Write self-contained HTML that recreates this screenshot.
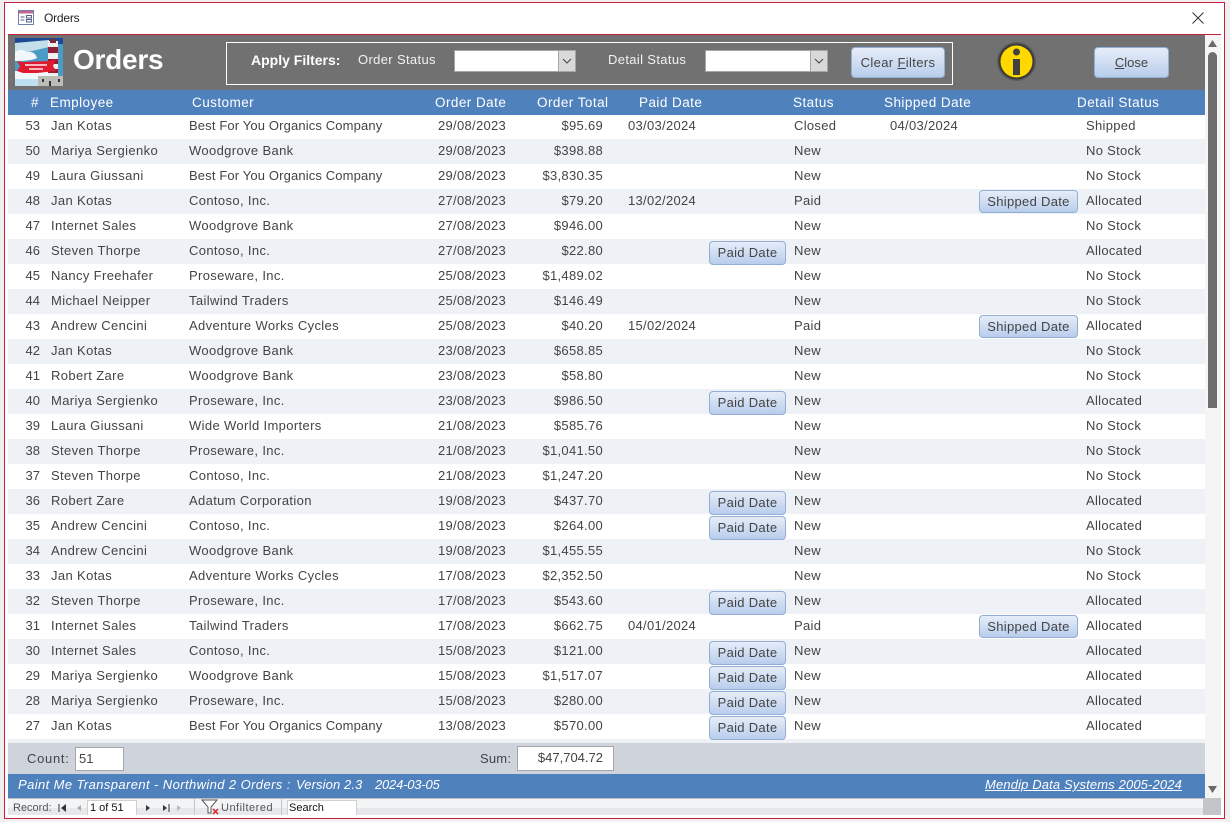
<!DOCTYPE html>
<html><head><meta charset="utf-8"><title>Orders</title>
<style>
html,body{margin:0;padding:0;width:1230px;height:822px;overflow:hidden;background:#f0f0f0;font-family:"Liberation Sans",sans-serif;font-size:13px;color:#444}
div,span{position:absolute;white-space:nowrap;box-sizing:border-box}
#win{left:4px;top:2px;width:1221px;height:817px;background:#fff;border:1px solid #c4223a}
.r{left:8px;width:1197px;height:25px;line-height:23px;background:#fff;letter-spacing:.3px}
.r.a{background:#eef1f6}
.r span{top:0}
.n{left:0;width:32px;text-align:right;letter-spacing:0}
.e{left:43px;letter-spacing:.37px}.c{left:181px;letter-spacing:.36px}.c.l{letter-spacing:.14px}.d{left:430px}
.t{left:495px;width:100px;text-align:right}
.p{left:620px}.s{left:786px}.h{left:882px}.x{left:1078px}
.b{background:linear-gradient(#e6edf8,#b8cdec);border:1px solid #92aed4;border-radius:4px;text-align:center;color:#444}
.r .pb{left:701px;top:2px;width:77px;height:24px;line-height:21px;z-index:2}
.r .sb{left:971px;top:1px;width:99px;height:23px;line-height:21px;z-index:2}
.hd span{top:94px;color:#fff;line-height:17px;font-size:13.5px;letter-spacing:.45px}
.w{color:#fff}
</style></head><body>
<div id="win"></div>

<svg style="position:absolute;left:18px;top:10px" width="16" height="15" viewBox="0 0 16 15"><rect x=".5" y=".5" width="15" height="14" fill="#fff" stroke="#6f7fa8"/><rect x="1" y="1" width="14" height="2.5" fill="#c0688f"/><path d="M2.5 7h4M2.5 10h4" stroke="#55628a"/><rect x="8.5" y="5.5" width="5" height="2.5" fill="none" stroke="#55628a"/><rect x="8.5" y="9.5" width="5" height="2.5" fill="none" stroke="#55628a"/></svg>
<div style="left:44px;top:11px;font-size:12px;color:#222;line-height:15px;letter-spacing:-.2px">Orders</div>
<svg style="position:absolute;left:1192px;top:12px" width="12" height="12" viewBox="0 0 12 12"><path d="M.5.5l11 11M11.5.5l-11 11" stroke="#333" stroke-width="1"/></svg>

<div style="left:8px;top:34px;width:1213px;height:1px;background:#c4223a"></div>
<div style="left:8px;top:35px;width:1197px;height:55px;background:#717171"></div>

<svg style="position:absolute;left:15px;top:38px" width="48" height="48" viewBox="0 0 48 48">
<rect width="48" height="48" fill="#4a9cc4"/><rect width="48" height="6" fill="#1c4a94"/>
<path d="M0 5L34 2V9L0 17Z" fill="#c4dfea"/>
<path d="M0 14q6-4 12 0q8-1 10 6q-6 3-22 3Z" fill="#f2f7fa"/>
<path d="M0 33h34v8h-12v7H0Z" fill="#f2f7fa"/>
<rect x="0" y="41" width="24" height="7" fill="#bfe0ee"/>
<rect x="33" y="3" width="10" height="36" fill="#f4f0f0"/><rect x="33" y="9" width="10" height="6" fill="#8f1f38"/><rect x="33" y="21" width="10" height="5" fill="#8f1f38"/><rect x="33" y="31" width="10" height="4" fill="#8f1f38"/>
<rect x="35" y="1" width="6" height="4" fill="#7d2a3a"/>
<path d="M2 23L8 24L34 23L41 21L38 28L41 33L22 35L8 35L2 33L5 28Z" fill="#e01b30"/>
<rect x="10" y="26" width="22" height="2" fill="#f7b8c0"/><rect x="14" y="30" width="14" height="2" fill="#f7b8c0"/>
<rect x="23" y="38" width="25" height="10" fill="#bdbdb8"/><rect x="27" y="41" width="2" height="3" fill="#333"/><rect x="34" y="43" width="2" height="5" fill="#333"/><rect x="43" y="41" width="2" height="3" fill="#333"/>
</svg>
<div class="w" style="left:73px;top:43px;font-size:28px;font-weight:bold;line-height:34px;letter-spacing:-.25px">Orders</div>

<div style="left:226px;top:42px;width:727px;height:43px;border:1px solid #fff"></div>
<div class="w" style="left:251px;top:51px;font-weight:bold;font-size:14px;line-height:18px">Apply Filters:</div>
<div class="w" style="left:358px;top:51px;line-height:17px;color:#f2f2f2;letter-spacing:.35px">Order Status</div>
<div style="left:454px;top:50px;width:122px;height:22px;background:#fff;border:1px solid #a6a6a6"></div>
<div style="left:558px;top:51px;width:17px;height:20px;background:#d9d9d9;border-left:1px solid #a6a6a6"></div>
<svg style="position:absolute;left:562px;top:58px" width="10" height="6"><path d="M1 1l4 4 4-4" fill="none" stroke="#444"/></svg>
<div class="w" style="left:608px;top:51px;line-height:17px;color:#f2f2f2;letter-spacing:.35px">Detail Status</div>
<div style="left:705px;top:50px;width:123px;height:22px;background:#fff;border:1px solid #a6a6a6"></div>
<div style="left:810px;top:51px;width:17px;height:20px;background:#d9d9d9;border-left:1px solid #a6a6a6"></div>
<svg style="position:absolute;left:814px;top:58px" width="10" height="6"><path d="M1 1l4 4 4-4" fill="none" stroke="#444"/></svg>
<div class="b" style="left:851px;top:47px;width:94px;height:31px;line-height:29px;letter-spacing:.35px">Clear <u>F</u>ilters</div>
<div class="b" style="left:1094px;top:47px;width:75px;height:31px;line-height:29px"><u>C</u>lose</div>

<svg style="position:absolute;left:996px;top:41px" width="41" height="41" viewBox="0 0 41 41"><circle cx="20.5" cy="20.5" r="19.5" fill="#5a5a5a"/><circle cx="20.5" cy="20.5" r="18" fill="#3a3a3a"/><circle cx="20.5" cy="20.5" r="16" fill="#ffd800"/><circle cx="20.5" cy="11" r="3.5" fill="#404040"/><rect x="17" y="18" width="7" height="16" fill="#404040"/></svg>

<div class="r" style="top:115px;height:24px;line-height:21px"><span class="n">53</span><span class="e">Jan Kotas</span><span class="c l">Best For You Organics Company</span><span class="d">29/08/2023</span><span class="t">$95.69</span><span class="p">03/03/2024</span><span class="s">Closed</span><span class="h">04/03/2024</span><span class="x">Shipped</span></div>
<div class="r a" style="top:139px"><span class="n">50</span><span class="e">Mariya Sergienko</span><span class="c">Woodgrove Bank</span><span class="d">29/08/2023</span><span class="t">$398.88</span><span class="s">New</span><span class="x">No Stock</span></div>
<div class="r" style="top:164px"><span class="n">49</span><span class="e">Laura Giussani</span><span class="c l">Best For You Organics Company</span><span class="d">29/08/2023</span><span class="t">$3,830.35</span><span class="s">New</span><span class="x">No Stock</span></div>
<div class="r a" style="top:189px"><span class="n">48</span><span class="e">Jan Kotas</span><span class="c">Contoso, Inc.</span><span class="d">27/08/2023</span><span class="t">$79.20</span><span class="p">13/02/2024</span><span class="s">Paid</span><span class="b sb">Shipped Date</span><span class="x">Allocated</span></div>
<div class="r" style="top:214px"><span class="n">47</span><span class="e">Internet Sales</span><span class="c">Woodgrove Bank</span><span class="d">27/08/2023</span><span class="t">$946.00</span><span class="s">New</span><span class="x">No Stock</span></div>
<div class="r a" style="top:239px"><span class="n">46</span><span class="e">Steven Thorpe</span><span class="c">Contoso, Inc.</span><span class="d">27/08/2023</span><span class="t">$22.80</span><span class="b pb">Paid Date</span><span class="s">New</span><span class="x">Allocated</span></div>
<div class="r" style="top:264px"><span class="n">45</span><span class="e">Nancy Freehafer</span><span class="c">Proseware, Inc.</span><span class="d">25/08/2023</span><span class="t">$1,489.02</span><span class="s">New</span><span class="x">No Stock</span></div>
<div class="r a" style="top:289px"><span class="n">44</span><span class="e">Michael Neipper</span><span class="c">Tailwind Traders</span><span class="d">25/08/2023</span><span class="t">$146.49</span><span class="s">New</span><span class="x">No Stock</span></div>
<div class="r" style="top:314px"><span class="n">43</span><span class="e">Andrew Cencini</span><span class="c">Adventure Works Cycles</span><span class="d">25/08/2023</span><span class="t">$40.20</span><span class="p">15/02/2024</span><span class="s">Paid</span><span class="b sb">Shipped Date</span><span class="x">Allocated</span></div>
<div class="r a" style="top:339px"><span class="n">42</span><span class="e">Jan Kotas</span><span class="c">Woodgrove Bank</span><span class="d">23/08/2023</span><span class="t">$658.85</span><span class="s">New</span><span class="x">No Stock</span></div>
<div class="r" style="top:364px"><span class="n">41</span><span class="e">Robert Zare</span><span class="c">Woodgrove Bank</span><span class="d">23/08/2023</span><span class="t">$58.80</span><span class="s">New</span><span class="x">No Stock</span></div>
<div class="r a" style="top:389px"><span class="n">40</span><span class="e">Mariya Sergienko</span><span class="c">Proseware, Inc.</span><span class="d">23/08/2023</span><span class="t">$986.50</span><span class="b pb">Paid Date</span><span class="s">New</span><span class="x">Allocated</span></div>
<div class="r" style="top:414px"><span class="n">39</span><span class="e">Laura Giussani</span><span class="c">Wide World Importers</span><span class="d">21/08/2023</span><span class="t">$585.76</span><span class="s">New</span><span class="x">No Stock</span></div>
<div class="r a" style="top:439px"><span class="n">38</span><span class="e">Steven Thorpe</span><span class="c">Proseware, Inc.</span><span class="d">21/08/2023</span><span class="t">$1,041.50</span><span class="s">New</span><span class="x">No Stock</span></div>
<div class="r" style="top:464px"><span class="n">37</span><span class="e">Steven Thorpe</span><span class="c">Contoso, Inc.</span><span class="d">21/08/2023</span><span class="t">$1,247.20</span><span class="s">New</span><span class="x">No Stock</span></div>
<div class="r a" style="top:489px"><span class="n">36</span><span class="e">Robert Zare</span><span class="c">Adatum Corporation</span><span class="d">19/08/2023</span><span class="t">$437.70</span><span class="b pb">Paid Date</span><span class="s">New</span><span class="x">Allocated</span></div>
<div class="r" style="top:514px"><span class="n">35</span><span class="e">Andrew Cencini</span><span class="c">Contoso, Inc.</span><span class="d">19/08/2023</span><span class="t">$264.00</span><span class="b pb">Paid Date</span><span class="s">New</span><span class="x">Allocated</span></div>
<div class="r a" style="top:539px"><span class="n">34</span><span class="e">Andrew Cencini</span><span class="c">Woodgrove Bank</span><span class="d">19/08/2023</span><span class="t">$1,455.55</span><span class="s">New</span><span class="x">No Stock</span></div>
<div class="r" style="top:564px"><span class="n">33</span><span class="e">Jan Kotas</span><span class="c">Adventure Works Cycles</span><span class="d">17/08/2023</span><span class="t">$2,352.50</span><span class="s">New</span><span class="x">No Stock</span></div>
<div class="r a" style="top:589px"><span class="n">32</span><span class="e">Steven Thorpe</span><span class="c">Proseware, Inc.</span><span class="d">17/08/2023</span><span class="t">$543.60</span><span class="b pb">Paid Date</span><span class="s">New</span><span class="x">Allocated</span></div>
<div class="r" style="top:614px"><span class="n">31</span><span class="e">Internet Sales</span><span class="c">Tailwind Traders</span><span class="d">17/08/2023</span><span class="t">$662.75</span><span class="p">04/01/2024</span><span class="s">Paid</span><span class="b sb">Shipped Date</span><span class="x">Allocated</span></div>
<div class="r a" style="top:639px"><span class="n">30</span><span class="e">Internet Sales</span><span class="c">Contoso, Inc.</span><span class="d">15/08/2023</span><span class="t">$121.00</span><span class="b pb">Paid Date</span><span class="s">New</span><span class="x">Allocated</span></div>
<div class="r" style="top:664px"><span class="n">29</span><span class="e">Mariya Sergienko</span><span class="c">Woodgrove Bank</span><span class="d">15/08/2023</span><span class="t">$1,517.07</span><span class="b pb">Paid Date</span><span class="s">New</span><span class="x">Allocated</span></div>
<div class="r a" style="top:689px"><span class="n">28</span><span class="e">Mariya Sergienko</span><span class="c">Proseware, Inc.</span><span class="d">15/08/2023</span><span class="t">$280.00</span><span class="b pb">Paid Date</span><span class="s">New</span><span class="x">Allocated</span></div>
<div class="r" style="top:714px"><span class="n">27</span><span class="e">Jan Kotas</span><span class="c l">Best For You Organics Company</span><span class="d">13/08/2023</span><span class="t">$570.00</span><span class="b pb">Paid Date</span><span class="s">New</span><span class="x">Allocated</span></div>
<div class="r a" style="top:739px;height:4px"></div>

<div style="left:8px;top:90px;width:1197px;height:25px;background:#4f81bd"></div>
<div class="hd">
<span style="left:31px">#</span><span style="left:50px">Employee</span><span style="left:192px">Customer</span><span style="left:435px">Order Date</span><span style="left:537px">Order Total</span><span style="left:639px">Paid Date</span><span style="left:793px">Status</span><span style="left:884px">Shipped Date</span><span style="left:1077px">Detail Status</span>
</div>

<div style="left:8px;top:743px;width:1197px;height:31px;background:#ced3dc"></div>
<div style="left:27px;top:751px;line-height:16px;letter-spacing:.7px">Count:</div>
<div style="left:75px;top:747px;width:49px;height:24px;background:#fff;border:1px solid #a6a6a6;line-height:22px;padding-left:3px">51</div>
<div style="left:480px;top:751px;line-height:16px;letter-spacing:.2px">Sum:</div>
<div style="left:517px;top:746px;width:97px;height:25px;background:#fff;border:1px solid #a6a6a6;line-height:22px;text-align:right;padding-right:10px">$47,704.72</div>

<div style="left:8px;top:774px;width:1197px;height:24px;background:#4f81bd"></div>
<div class="w" style="left:18px;top:776px;line-height:17px;font-style:italic;letter-spacing:.4px">Paint Me Transparent - Northwind 2 Orders :</div>
<div class="w" style="left:296px;top:776px;line-height:17px;font-style:italic;letter-spacing:.1px">Version 2.3</div>
<div class="w" style="left:375px;top:776px;line-height:17px;font-style:italic;letter-spacing:-.2px">2024-03-05</div>
<div class="w" style="left:985px;top:776px;line-height:17px;font-style:italic;text-decoration:underline;letter-spacing:.14px">Mendip Data Systems 2005-2024</div>

<div style="left:8px;top:798px;width:1195px;height:17px;background:linear-gradient(#f3f4f6 0 55%,#e6e8ec 55%);border-top:1px solid #b9bcc2"></div>
<div style="left:13px;top:801px;font-size:11px;line-height:14px;color:#555">Record:</div>
<svg style="position:absolute;left:56px;top:802px" width="135" height="12"><path d="M3 2v8" stroke="#333"/><path d="M10 2v8l-5-4z" fill="#333"/><path d="M25 3v6l-4-3z" fill="#aaa"/><path d="M90 3v6l4-3z" fill="#333"/><path d="M107 3v6l4-3z" fill="#333"/><path d="M113 2v8" stroke="#333"/><path d="M121 3v6l4-3z" fill="#bbb"/></svg>
<div style="left:87px;top:800px;width:50px;height:15px;background:#fff;border:1px solid #d0d0d0;border-bottom:0;font-size:11px;line-height:14px;color:#111;padding-left:2px">1 of 51</div>
<div style="left:194px;top:799px;width:1px;height:16px;background:#c4c6cc"></div>
<svg style="position:absolute;left:201px;top:799px" width="19" height="16"><path d="M1 1h15l-6 7v6h-3v-6z" fill="#fff" stroke="#555"/><path d="M12 10l5 5M17 10l-5 5" stroke="#d8232a" stroke-width="1.5"/></svg>
<div style="left:221px;top:801px;font-size:11px;line-height:14px;color:#555;letter-spacing:.5px">Unfiltered</div>
<div style="left:281px;top:799px;width:1px;height:16px;background:#c4c6cc"></div>
<div style="left:287px;top:800px;width:70px;height:15px;background:#fff;border:1px solid #d0d0d0;border-bottom:0;font-size:11px;line-height:14px;color:#111;padding-left:1px">Search</div>

<div style="left:1205px;top:35px;width:16px;height:763px;background:#f5f5f5"></div>
<svg style="position:absolute;left:1208px;top:40px" width="9" height="7"><path d="M4.5 0l4.5 7H0z" fill="#6a6a6a"/></svg>
<div style="left:1208px;top:52px;width:9px;height:356px;background:#6e6e6e;border-radius:5px 5px 0 0"></div>
<svg style="position:absolute;left:1208px;top:786px" width="9" height="7"><path d="M0 0h9L4.5 7z" fill="#6a6a6a"/></svg>
<div style="left:1203px;top:798px;width:18px;height:17px;background:#c4c5c9"></div>
</body></html>
